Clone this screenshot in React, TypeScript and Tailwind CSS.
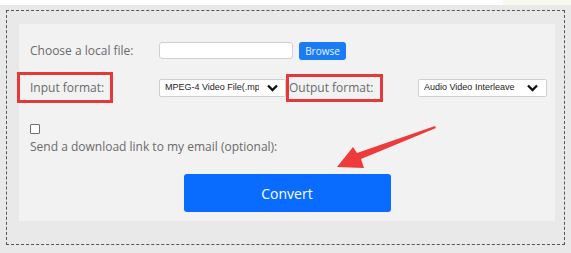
import React from "react";

function Chevron() {
  return (
    <svg width="11" height="8" viewBox="0 0 11 8" className="shrink-0">
      <path d="M1 1.5 L5.5 6 L10 1.5" fill="none" stroke="#111" strokeWidth="2.4" />
    </svg>
  );
}

function FakeSelect({
  label,
  className,
  textWidth,
}: {
  label: string;
  className: string;
  textWidth: string;
}) {
  return (
    <div
      className={`flex h-[18px] items-center justify-between overflow-hidden rounded-[2px] border border-[#cfcfcf] bg-white pl-[5px] pr-[5px] ${className}`}
    >
      <span
        className={`overflow-hidden whitespace-nowrap font-['Liberation_Sans',sans-serif] text-[9px] text-[#222] ${textWidth}`}
      >
        {label}
      </span>
      <Chevron />
    </div>
  );
}

export default function App() {
  return (
    <div className="relative h-[253px] w-[571px] overflow-hidden bg-white font-['Open_Sans',sans-serif] text-[12px] text-[#6a6a6a]">
      <div className="flex h-[5px]">
        <div className="flex-1" />
        <div className="w-[68px] bg-[#f8f8ef]" />
      </div>
      <div className="h-[248px] bg-[#e9e9e9] px-[6px] pt-[5px]">
        <div className="h-[235px] border border-dashed border-[#555] pl-[12px] pr-[9px] pt-[13px]">
          <div className="h-[197px] bg-[#f2f2f2] pl-[11px] pt-[18px]">
            {/* local file */}
            <div className="flex h-[17px] items-center">
              <div className="w-[129px]">Choose a local file:</div>
              <div className="h-[17px] w-[134px] rounded-[3px] border border-[#cfcfcf] bg-white" />
              <button className="ml-[6px] h-[18px] w-[47px] rounded-[3px] bg-[#1a7cf5] text-[10px] leading-none text-[#e8f1ff]">
                Browse
              </button>
            </div>

            {/* formats */}
            <div className="mt-[13px] flex h-[31px] items-center">
              <div className="w-[129px]">
                <div className="ml-[-13px] flex h-[31px] w-[96px] items-center border-[3px] border-[#e5383b] pl-[10px]">
                  Input format:
                </div>
              </div>
              <FakeSelect
                label="MPEG-4 Video File(.mp4)"
                className="w-[127px] pr-[7px]"
                textWidth="w-[94px]"
              />
              <div className="flex h-[28px] w-[97px] items-center border-[3px] border-[#e5383b]">
                Output format:
              </div>
              <FakeSelect
                label="Audio Video Interleave"
                className="ml-[35px] w-[129px] pr-[8px]"
                textWidth="w-[96px]"
              />
            </div>

            {/* email */}
            <div className="mt-[21px]">
              <input
                type="checkbox"
                className="block h-[10px] w-[10px] appearance-none rounded-[1px] border border-[#6d6d6d] bg-white"
              />
              <div className="mt-[4px] leading-[17px]">Send a download link to my email (optional):</div>
            </div>

            <div className="mt-[19px] flex justify-center">
              <button className="ml-[-11px] h-[38px] w-[207px] rounded-[3px] bg-[#0a6cff] text-[14px] text-white">
                Convert
              </button>
            </div>
          </div>
        </div>
      </div>

      <svg
        className="pointer-events-none absolute left-0 top-0"
        width="571"
        height="253"
        viewBox="0 0 571 253"
      >
        <polygon
          points="337,167 353,147 357,153 435,126 436,128 361,159 364,168"
          fill="#ee3a3a"
        />
      </svg>
    </div>
  );
}
